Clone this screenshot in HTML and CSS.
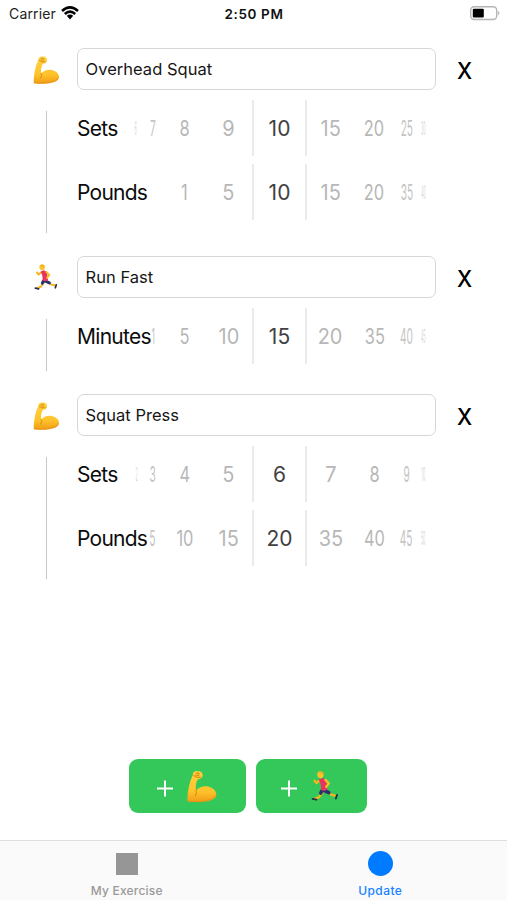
FILE: index.html
```html
<!DOCTYPE html>
<html lang="en">
<head>
<meta charset="utf-8">
<title>Update</title>
<link rel="stylesheet" href="styles.css">
</head>
<body>
<svg class="defs" width="0" height="0" aria-hidden="true">
  <defs>
    <linearGradient id="skin" x1="0" y1="0" x2="0" y2="1">
      <stop offset="0" stop-color="#ffd03d"/>
      <stop offset=".65" stop-color="#ffc32b"/>
      <stop offset="1" stop-color="#ef9d17"/>
    </linearGradient>
    <symbol id="arm" viewBox="0 0 90 96">
      <path fill="url(#skin)" d="M17 14C17 5 24 0 32 2C42 1 48 7 47 16C46 23 40 26 32 27C27 37 25 47 27 60C37 49 51 46 63 48C77 51 88 61 88 72C88 85 72 91 54 93C35 96 15 95 3 93Q0 92 1 86C2 60 7 35 17 14Z"/>
      <path fill="none" stroke="#d58b16" stroke-width="3.2" stroke-linecap="round" d="M20 15Q27 23 40 20M27 8Q36 5 36 13Q31 18 26 13M27 60Q31 68 25 76"/>
      <path fill="none" stroke="#e28f12" stroke-width="3" stroke-linecap="round" opacity=".7" d="M4 92Q43 96 69 87Q82 82 86 75"/>
    </symbol>
    <symbol id="runner" viewBox="0 0 72 80">
      <g fill="none" stroke-linecap="round" stroke-linejoin="round">
        <path stroke="#f5b51c" stroke-width="6" d="M20 26L14 31L9 25M31 53L21 67L10 72M43 54L52 61L64 64"/>
        <path stroke="#27326f" stroke-width="9" d="M28 51L25 57M33 50L46 56"/>
        <path stroke="#26304f" stroke-width="5" d="M4 72L14 74M67 62L64 71"/>
      </g>
      <path fill="#e9325f" d="M20 22L30 18Q38 20 40 30L42 48Q34 54 26 49L25 35Z"/>
      <path fill="none" stroke="#f9be27" stroke-width="6" stroke-linecap="round" stroke-linejoin="round" d="M37 23L46 32L39 41"/>
      <path fill="#fcc52d" d="M16 8C16 2 21 0 25 1C31 1 34 6 32 12C31 17 27 20 22 18C18 17 16 14 16 8Z"/>
      <path fill="#f0ad20" d="M18 4Q25-2 31 4L32 12Q29 11 27 6Q22 8 18 4Z"/>
    </symbol>
  </defs>
</svg>
<div class="screen">
  <header class="status">
    <div class="carrier"><span>Carrier</span>
      <svg class="wifi" viewBox="0 0 18 14"><g fill="none" stroke="#000" stroke-width="2.5"><path d="M1 5Q9-2.2 17 5M3.8 8Q9 3.2 14.2 8"/></g><path d="M5.8 9.8Q9 7.2 12.2 9.8L9 13.4Z"/></svg>
    </div>
    <div class="time">2:50 PM</div>
    <svg class="battery" viewBox="0 0 32 16"><rect x="1.7" y="1.7" width="26" height="12.8" rx="3.5" fill="#fff" stroke="#b5b5b5" stroke-width="1.4"/><rect x="3.8" y="3.8" width="11" height="8.7" rx="1" /><path d="M29.2 5.7Q31.5 8 29.2 10.5Z" fill="#aaa"/></svg>
  </header>

  <main>
    <section class="exercise">
      <div class="head"><svg class="emoji arm"><use href="#arm"/></svg><div class="field">Overhead Squat</div><div class="remove">X</div></div>
      <div class="body">
        <div class="rail double"></div>
        <div class="rows">
          <div class="row"><span class="label sets">Sets</span><div class="wheel"><i class="edge"><b>6</b></i><i class="far"><b>7</b></i><i class="mid"><b>8</b></i><i class="near"><b>9</b></i><i class="current"><b>10</b></i><i class="near"><b>15</b></i><i class="mid"><b>20</b></i><i class="far"><b>25</b></i><i class="edge right"><b>30</b></i></div></div>
          <div class="row"><span class="label pounds">Pounds</span><div class="wheel"><i></i><i></i><i class="mid"><b>1</b></i><i class="near"><b>5</b></i><i class="current"><b>10</b></i><i class="near"><b>15</b></i><i class="mid"><b>20</b></i><i class="far"><b>35</b></i><i class="edge right"><b>40</b></i></div></div>
        </div>
      </div>
    </section>
    <section class="exercise">
      <div class="head"><svg class="emoji runner"><use href="#runner"/></svg><div class="field">Run Fast</div><div class="remove">X</div></div>
      <div class="body">
        <div class="rail"></div>
        <div class="rows">
          <div class="row"><span class="label minutes">Minutes</span><div class="wheel"><i></i><i class="far"><b>1</b></i><i class="mid"><b>5</b></i><i class="near"><b>10</b></i><i class="current"><b>15</b></i><i class="near"><b>20</b></i><i class="mid"><b>35</b></i><i class="far"><b>40</b></i><i class="edge right"><b>45</b></i></div></div>
        </div>
      </div>
    </section>
    <section class="exercise">
      <div class="head"><svg class="emoji arm"><use href="#arm"/></svg><div class="field">Squat Press</div><div class="remove">X</div></div>
      <div class="body">
        <div class="rail double"></div>
        <div class="rows">
          <div class="row"><span class="label sets">Sets</span><div class="wheel"><i class="edge"><b>2</b></i><i class="far"><b>3</b></i><i class="mid"><b>4</b></i><i class="near"><b>5</b></i><i class="current"><b>6</b></i><i class="near"><b>7</b></i><i class="mid"><b>8</b></i><i class="far"><b>9</b></i><i class="edge right"><b>10</b></i></div></div>
          <div class="row"><span class="label pounds">Pounds</span><div class="wheel"><i></i><i class="far"><b>5</b></i><i class="mid"><b>10</b></i><i class="near"><b>15</b></i><i class="current"><b>20</b></i><i class="near"><b>35</b></i><i class="mid"><b>40</b></i><i class="far"><b>45</b></i><i class="edge right"><b>50</b></i></div></div>
        </div>
      </div>
    </section>
  </main>

  <div class="actions">
    <div class="add"><svg class="plus" viewBox="0 0 16 17"><path d="M8 .5V16.5M0 8.5H16"/></svg><svg class="big-arm"><use href="#arm"/></svg></div>
    <div class="add cardio"><svg class="plus" viewBox="0 0 16 17"><path d="M8 .5V16.5M0 8.5H16"/></svg><svg class="big-runner"><use href="#runner"/></svg></div>
  </div>

  <nav class="tabs">
    <div class="tab"><div class="icon"><span class="square"></span></div><span>My Exercise</span></div>
    <div class="tab active"><div class="icon"><span class="circle"></span></div><span>Update</span></div>
  </nav>
</div>
</body>
</html>
```
FILE: styles.css
```css
* { box-sizing: border-box; }
body { margin: 0; background: #fff; font-family: Inter, "Liberation Sans", sans-serif; color: #111; }
.defs { display: block; height: 0; }
.screen { width: 507px; height: 900px; display: flex; flex-direction: column; overflow: hidden; }
.status { height: 48px; padding: 4px 6px 0 9px; display: grid; grid-template-columns: 1fr 80px 1fr; align-items: start; line-height: 20px; }
.carrier { display: flex; font-size: 14px; letter-spacing: .15px; color: #222; gap: 5px; }
.wifi { width: 18px; height: 14px; margin-top: 2px; }
.time { font-size: 13.5px; font-weight: 600; text-align: center; white-space: nowrap; letter-spacing: .6px; margin-left: -2px; }
.battery { width: 32px; height: 16px; justify-self: end; margin-top: 1px; }
.head { height: 42px; display: grid; grid-template-columns: 33px 44px 359px 57px; align-items: center; }
.emoji { grid-column: 2; }
.arm { width: 27px; height: 28px; margin-top: 2px; }
.runner { width: 24px; height: 27px; margin-left: 1px; }
.field { height: 42px; border: 1.5px solid #d7d7d7; border-radius: 7px; padding-left: 7.5px; font-size: 16.5px; line-height: 40px; letter-spacing: .03px; color: #161616; }
.remove { text-align: center; font-size: 23px; font-weight: 500; line-height: 42px; padding-top: 2px; height: 42px; color: #000; transform: scaleX(.94); }
.body { display: flex; align-items: flex-start; }
.rail { width: 1px; height: 52px; margin: 21px 30px 23px 46px; background: #c8c8c8; }
.rail.double { height: 122px; }
.rows { padding-top: 10px; display: grid; gap: 8px; }
.row { height: 56px; display: grid; grid-template-columns: 53px 299px; }
.label { font-size: 21px; line-height: 58px; white-space: nowrap; color: #0c0c0c; letter-spacing: -.75px; }
.label.minutes { letter-spacing: -.7px; }
.pounds, .pounds + .wheel i { line-height: 57px; }
.wheel { display: grid; grid-template-columns: 12px 21px 43px 45px 57px 45px 43px 21px 12px; text-align: center; font-size: 21px; line-height: 58px; }
.wheel i { font-style: normal; display: flex; justify-content: center; color: #b7b7b7; height: 56px; }
.wheel b { font-weight: 400; display: block; }
.wheel .near b { transform: scaleX(.95); }
.wheel .mid b { transform: scaleX(.78); }
.wheel .far { color: #c4c4c4; }
.wheel .far b { transform: scaleX(.48); }
.minutes + .wheel .far:nth-child(2) b { transform: translateX(1px) scaleX(.4); }
.wheel .edge { color: #d8d8d8; overflow: hidden; }
.wheel .edge b { transform: scaleX(.2); font-size: 18px; }
.wheel .current { margin: 0 1px; border-left: 2px solid #ebebeb; border-right: 2px solid #ebebeb; color: #414141; }
.actions { display: flex; gap: 10px; margin: auto 0 27px 129px; }
.add { width: 117px; height: 54px; border-radius: 9px; background: #34c759; display: flex; align-items: center; padding-left: 28px; }
.add.cardio { width: 111px; padding-left: 25px; }
.plus { width: 16px; height: 17px; margin-top: 5px; fill: none; stroke: #fff; stroke-width: 2; }
.big-arm { width: 30px; height: 33px; margin-left: 14px; }
.big-runner { width: 28px; height: 31px; margin-left: 14px; }
.tabs { height: 60px; border-top: 1px solid #dedede; background: #fafafa; display: grid; grid-template-columns: 1fr 1fr; flex: none; }
.tab { display: flex; flex-direction: column; align-items: center; font-size: 12px; font-weight: 500; color: #999; padding-top: 10px; line-height: 16px; letter-spacing: .2px; }
.tab .icon { height: 25px; display: flex; align-items: center; margin-bottom: 7px; }
.square { width: 22px; height: 22px; background: #969696; }
.circle { width: 25px; height: 25px; border-radius: 50%; background: #007aff; }
.tab.active { color: #1683ff; letter-spacing: .4px; }
```
